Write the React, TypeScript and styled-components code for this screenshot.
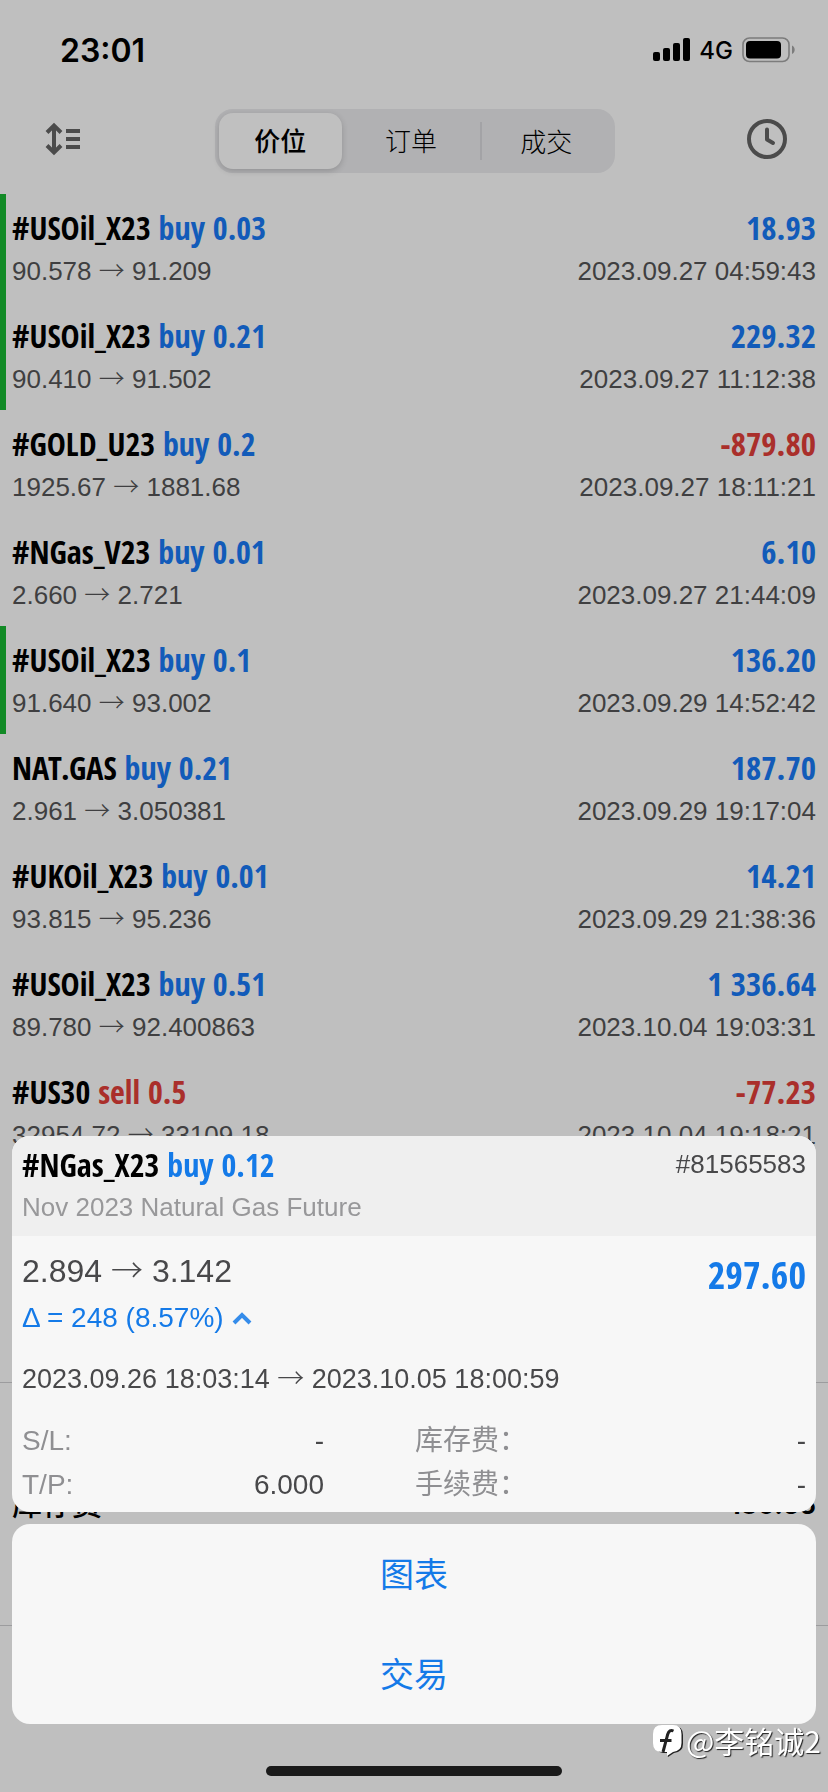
import React from 'react';
import styled, { createGlobalStyle } from 'styled-components';

const sans = '"Liberation Sans", "Noto Sans CJK SC", sans-serif';
const narrow = '"Open Sans Condensed", "Liberation Sans Narrow", "Liberation Sans", sans-serif';

const Global = createGlobalStyle`
  * { box-sizing: border-box; }
  body { margin: 0; background: #bfbfbf; font-family: ${sans}; }
  button { border: 0; background: none; padding: 0; font-family: inherit; color: inherit; }
  h2, p, dl, dd, dt, ul { margin: 0; padding: 0; font-weight: 400; }
`;

const Screen = styled.div`
  position: relative;
  display: flex;
  flex-direction: column;
  min-height: 100vh;
  background: #bfbfbf;
  color: #3f3f41;
`;

const StatusBar = styled.header`
  display: flex;
  justify-content: space-between;
  align-items: center;
  height: 100px;
  padding: 0 32px 0 60px;
  font-family: Inter, sans-serif;
  color: #000;
`;

const Clock = styled.time`
  font-size: 32px;
  font-weight: 600;
`;

const Signals = styled.div`
  display: flex;
  align-items: center;
  gap: 9px;
  font-size: 24px;
  font-weight: 500;
`;

const Toolbar = styled.nav`
  display: flex;
  align-items: center;
  justify-content: space-between;
  height: 94px;
  padding: 0 41px 12px 44px;
`;

const IconButton = styled.button`
  display: flex;
  padding-bottom: 4px;
  color: #4b4b4b;
`;

const Segments = styled.div`
  display: grid;
  grid-template-columns: 124fr 139fr 131fr;
  align-items: center;
  width: 400px;
  height: 64px;
  padding: 4px;
  border-radius: 18px;
  background: #b1b1b3;
`;

const Segment = styled.button<{ $active?: boolean; $divided?: boolean }>`
  height: ${p => (p.$divided ? 38 : 56)}px;
  padding-bottom: 4px;
  border-radius: ${p => (p.$divided ? 0 : 14)}px;
  border-left: ${p => (p.$divided ? '2px solid #a3a3a6' : '0')};
  background: ${p => (p.$active ? '#c0c0c0' : 'transparent')};
  box-shadow: ${p => (p.$active ? '0 2px 6px rgba(0, 0, 0, 0.18)' : 'none')};
  color: #000;
  font-size: 26px;
  font-weight: ${p => (p.$active ? 500 : 300)};
`;

const Deals = styled.ul`
  list-style: none;
  padding-bottom: 216px;
`;

const Deal = styled.li<{ $marked?: boolean }>`
  display: grid;
  grid-template-rows: 38px 48px;
  height: 108px;
  padding: 15px 12px 0 6px;
  border-left: 6px solid ${p => (p.$marked ? '#128a26' : 'transparent')};
`;

const Line = styled.div`
  display: flex;
  justify-content: space-between;
  align-items: center;
  white-space: pre;
`;

const Symbol = styled.h2`
  font: 700 32px/38px ${narrow};
  color: #000;
`;

const Amount = styled.strong<{ $color: string }>`
  font: 700 33px/38px ${narrow};
  color: ${p => p.$color};
`;

const Tone = styled.span<{ $color: string }>`
  color: ${p => p.$color};
`;

const Detail = styled.p`
  font-size: 26px;
  line-height: 38px;
`;

const ArrowGlyph = styled.span`
  font-family: "Noto Sans CJK SC", sans-serif;
  font-weight: 300;
  line-height: 1;
`;

const Summary = styled.section`
  height: 244px;
  padding: 102px 12px 0;
  border-top: 1px solid #9c9c9e;
  border-bottom: 1px solid #9c9c9e;
  color: #000;
  font-size: 30px;
  font-weight: 500;
  line-height: 40px;
`;

const Total = styled.strong`
  font-family: Inter, sans-serif;
  font-size: 26px;
  font-weight: 700;
`;

const Sheet = styled.div`
  position: fixed;
  inset: auto 0 0;
  display: flex;
  flex-direction: column;
  gap: 12px;
  padding: 0 12px;
`;

const Card = styled.article`
  overflow: hidden;
  border-radius: 18px;
  background: #f7f7f7;
  color: #48484a;
`;

const CardHeader = styled.header`
  display: flex;
  justify-content: space-between;
  height: 100px;
  padding: 10px 10px 0;
  background: #efefef;
`;

const Description = styled.p`
  color: #98989a;
  font-size: 26px;
  line-height: 46px;
`;

const Ticket = styled.span`
  font-size: 26px;
  line-height: 36px;
`;

const CardBody = styled.div`
  padding: 13px 10px 5px;
`;

const PriceLine = styled.div`
  display: flex;
  justify-content: space-between;
  align-items: flex-start;
  height: 48px;
`;

const Price = styled.p`
  font-size: 32px;
  line-height: 44px;
`;

const Profit = styled.strong`
  font: 700 38px/50px ${narrow};
  color: #147ae8;
`;

const DeltaButton = styled.button`
  display: flex;
  align-items: center;
  gap: 8px;
  color: #147ae8;
  font-size: 28px;
  line-height: 42px;
`;

const Period = styled.p`
  padding: 18px 0;
  font-size: 27px;
  line-height: 44px;
`;

const Fields = styled.dl`
  display: grid;
  grid-template-columns: 302px 1fr;
  column-gap: 91px;
`;

const Field = styled.div`
  display: flex;
  justify-content: space-between;
  font-size: 28px;
  line-height: 44px;
`;

const Label = styled.dt`
  color: #8f8f92;
`;

const Actions = styled.div`
  display: grid;
  grid-auto-rows: 100px;
  border-radius: 18px;
  background: #f7f7f7;
`;

const Action = styled.button`
  padding-bottom: 4px;
  color: #147ae8;
  font-size: 34px;
`;

const Footer = styled.div`
  display: flex;
  justify-content: center;
  height: 56px;
  padding-top: 30px;
`;

const HomeIndicator = styled.div`
  width: 296px;
  height: 10px;
  border-radius: 5px;
  background: #1a1a1a;
`;

const Watermark = styled.div`
  position: absolute;
  right: 7px;
  bottom: 34px;
  display: flex;
  align-items: center;
  gap: 2px;
  color: #fff;
  font: 400 30px/36px "Noto Sans CJK SC", sans-serif;
  text-shadow: 1px 1px 1px #222;
`;

const BLUE = '#125bb9';
const RED = '#aa2f2b';

type DealData = {
  symbol: string;
  side: 'buy' | 'sell';
  volume: string;
  profit: string;
  open: string;
  close: string;
  time: string;
  marked?: boolean;
};

const deals: DealData[] = [
  { symbol: '#USOil_X23', side: 'buy', volume: '0.03', profit: '18.93', open: '90.578', close: '91.209', time: '2023.09.27 04:59:43', marked: true },
  { symbol: '#USOil_X23', side: 'buy', volume: '0.21', profit: '229.32', open: '90.410', close: '91.502', time: '2023.09.27 11:12:38', marked: true },
  { symbol: '#GOLD_U23', side: 'buy', volume: '0.2', profit: '-879.80', open: '1925.67', close: '1881.68', time: '2023.09.27 18:11:21' },
  { symbol: '#NGas_V23', side: 'buy', volume: '0.01', profit: '6.10', open: '2.660', close: '2.721', time: '2023.09.27 21:44:09' },
  { symbol: '#USOil_X23', side: 'buy', volume: '0.1', profit: '136.20', open: '91.640', close: '93.002', time: '2023.09.29 14:52:42', marked: true },
  { symbol: 'NAT.GAS', side: 'buy', volume: '0.21', profit: '187.70', open: '2.961', close: '3.050381', time: '2023.09.29 19:17:04' },
  { symbol: '#UKOil_X23', side: 'buy', volume: '0.01', profit: '14.21', open: '93.815', close: '95.236', time: '2023.09.29 21:38:36' },
  { symbol: '#USOil_X23', side: 'buy', volume: '0.51', profit: '1 336.64', open: '89.780', close: '92.400863', time: '2023.10.04 19:03:31' },
  { symbol: '#US30', side: 'sell', volume: '0.5', profit: '-77.23', open: '32954.72', close: '33109.18', time: '2023.10.04 19:18:21' },
];

function Arrow() {
  return <ArrowGlyph>→</ArrowGlyph>;
}

function SignalIcon() {
  return (
    <svg width="37" height="24" viewBox="0 0 37 24" fill="#000" aria-hidden="true">
      <rect x="0" y="14" width="7" height="9" rx="2" />
      <rect x="10" y="10" width="7" height="13" rx="2" />
      <rect x="20" y="5" width="7" height="18" rx="2" />
      <rect x="30" y="0" width="7" height="23" rx="2" />
    </svg>
  );
}

function BatteryIcon() {
  return (
    <svg width="54" height="26" viewBox="0 0 54 26" aria-hidden="true">
      <rect x="1" y="1" width="46" height="23.500" rx="6.500" fill="none" stroke="#7c7c7c" strokeWidth="1.600" />
      <rect x="4" y="4" width="35" height="17.500" rx="4" fill="#000" />
      <path d="M50 8.500c3.600 1.400 3.600 7.100 0 8.500z" fill="#7c7c7c" />
    </svg>
  );
}

function SortIcon() {
  return (
    <svg width="38" height="34" viewBox="0 0 38 34" fill="none" stroke="currentColor" strokeWidth="4" aria-hidden="true">
      <path d="M10 4V30M3 10.500L10 3.500L17 10.500M3 23.500L10 30.500L17 23.500" />
      <path d="M22 9H36M22 17H36M22 25H36" />
    </svg>
  );
}

function ClockIcon() {
  return (
    <svg width="40" height="40" viewBox="0 0 40 40" fill="none" stroke="currentColor" strokeWidth="4" strokeLinecap="round" strokeLinejoin="round" aria-hidden="true">
      <circle cx="20" cy="20" r="18" />
      <path d="M20 10.500V20.500L26 24" />
    </svg>
  );
}

function BrandIcon() {
  return (
    <svg width="31" height="34" viewBox="0 0 31 34" aria-hidden="true">
      <path d="M10 3H21Q30 3 30 12V21Q30 29 21 30L15 34L14 30H10Q2 29 2 21V12Q2 3 10 3Z" fill="#222" />
      <path d="M9 2H20Q28.500 2 28.500 11V20Q28.500 28 20 29L14 33L14 29H9Q0 29 0 20V11Q0 2 9 2Z" fill="#fff" />
      <path d="M20.500 8C16 6 14.500 10.500 13.500 16L10 29M7 17.500H18.500" fill="none" stroke="#222" strokeWidth="3" />
    </svg>
  );
}

export default function App() {
  return (
    <Screen>
      <Global />
      <StatusBar>
        <Clock>23:01</Clock>
        <Signals>
          <SignalIcon />
          <span>4G</span>
          <BatteryIcon />
        </Signals>
      </StatusBar>
      <Toolbar>
        <IconButton aria-label="排序"><SortIcon /></IconButton>
        <Segments>
          <Segment $active>价位</Segment>
          <Segment>订单</Segment>
          <Segment $divided>成交</Segment>
        </Segments>
        <IconButton aria-label="时间"><ClockIcon /></IconButton>
      </Toolbar>
      <Deals>
        {deals.map(d => (
          <Deal key={d.time} $marked={d.marked}>
            <Line>
              <Symbol>{d.symbol} <Tone $color={d.side === 'buy' ? BLUE : RED}>{d.side} {d.volume}</Tone></Symbol>
              <Amount $color={d.profit.startsWith('-') ? RED : BLUE}>{d.profit}</Amount>
            </Line>
            <Line>
              <Detail>{d.open} <Arrow /> {d.close}</Detail>
              <Detail as="time">{d.time}</Detail>
            </Line>
          </Deal>
        ))}
      </Deals>
      <Summary>
        <Line><span>库存费</span><Total>130.55</Total></Line>
      </Summary>
      <Sheet>
        <Card>
          <CardHeader>
            <div>
              <Symbol>#NGas_X23 <Tone $color="#147ae8">buy 0.12</Tone></Symbol>
              <Description>Nov 2023 Natural Gas Future</Description>
            </div>
            <Ticket>#81565583</Ticket>
          </CardHeader>
          <CardBody>
            <PriceLine>
              <Price>2.894 <Arrow /> 3.142</Price>
              <Profit>297.60</Profit>
            </PriceLine>
            <DeltaButton>
              Δ = 248 (8.57%)
              <svg width="20" height="14" viewBox="0 0 20 14" fill="none" stroke="currentColor" strokeWidth="4" opacity="0.85" aria-hidden="true">
                <path d="M2 12L10 4L18 12" />
              </svg>
            </DeltaButton>
            <Period>2023.09.26 18:03:14 <Arrow /> 2023.10.05 18:00:59</Period>
            <Fields>
              <Field><Label>S/L:</Label><dd>-</dd></Field>
              <Field><Label>库存费：</Label><dd>-</dd></Field>
              <Field><Label>T/P:</Label><dd>6.000</dd></Field>
              <Field><Label>手续费：</Label><dd>-</dd></Field>
            </Fields>
          </CardBody>
        </Card>
        <Actions>
          <Action>图表</Action>
          <Action>交易</Action>
        </Actions>
        <Footer><HomeIndicator /></Footer>
        <Watermark><BrandIcon /><span>@李铭诚2</span></Watermark>
      </Sheet>
    </Screen>
  );
}
